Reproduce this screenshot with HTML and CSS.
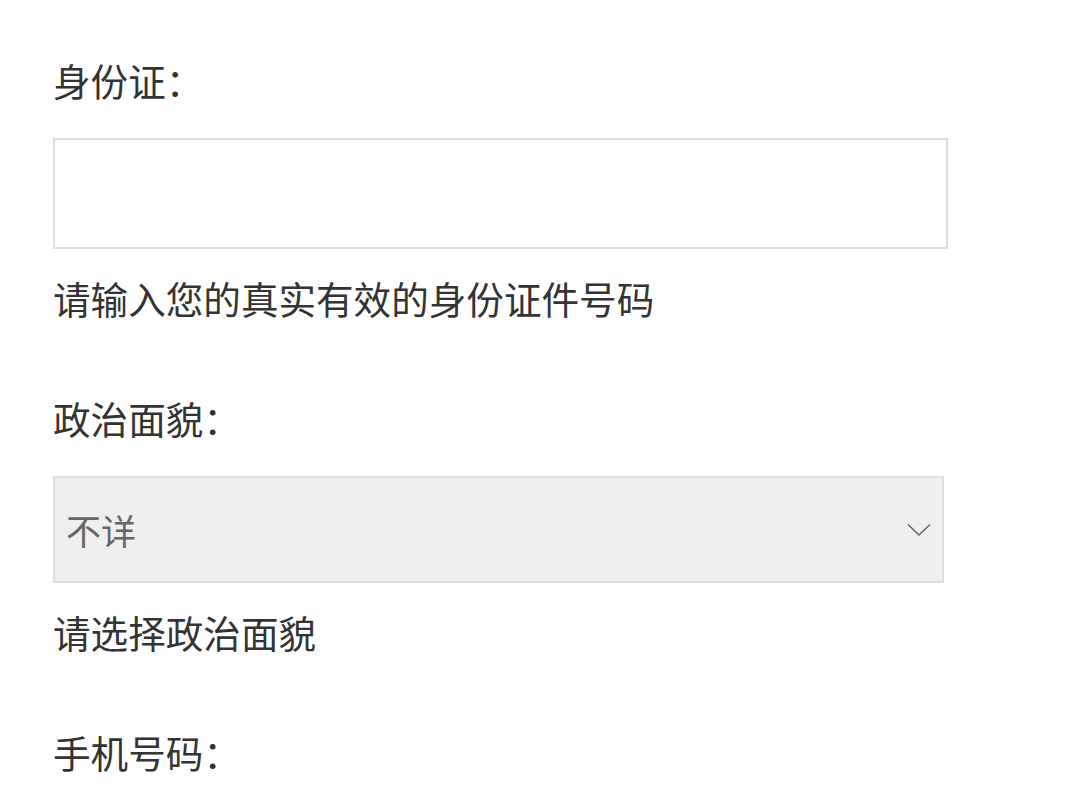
FILE: index.html
```html
<!DOCTYPE html>
<html lang="zh-CN">
<head>
<meta charset="utf-8">
<link rel="stylesheet" href="styles.css">
<title>表单</title>
</head>
<body>
<form class="form">
  <div class="field">
    <label class="label">身份证：</label>
    <div class="input"></div>
    <p class="help">请输入您的真实有效的身份证件号码</p>
  </div>
  <div class="field">
    <label class="label">政治面貌：</label>
    <div class="select">
      <span class="select-value">不详</span>
      <svg class="chevron" width="24" height="14" viewBox="0 0 24 14"><path d="M1 1.5 L12 12 L23 1.5" fill="none" stroke="#666" stroke-width="1.6"/></svg>
    </div>
    <p class="help">请选择政治面貌</p>
  </div>
  <div class="field">
    <label class="label">手机号码：</label>
  </div>
</form>
</body>
</html>
```
FILE: styles.css
```css
html, body {
  margin: 0;
  padding: 0;
  background: #fff;
}
body {
  font-family: "Noto Sans CJK SC", "Noto Sans", sans-serif;
  color: #333;
  font-size: 37.6px;
  line-height: 54px;
}
.form {
  padding: 53px 0 0 53px;
  display: flex;
  flex-direction: column;
  gap: 66px;
}
.field {
  display: flex;
  flex-direction: column;
  align-items: flex-start;
}
.label {
  display: block;
  margin-bottom: 31px;
}
.input {
  box-sizing: border-box;
  width: 895px;
  height: 111px;
  border: 2px solid #dedede;
  background: #fff;
}
.select {
  box-sizing: border-box;
  width: 891px;
  height: 107px;
  border: 2px solid #dedede;
  background: #efefef;
  display: flex;
  align-items: center;
  justify-content: space-between;
  padding: 0 11px 0 11px;
  color: #666;
  font-size: 35px;
}
.chevron {
  display: block;
}
.help {
  margin: 22px 0 0;
}
```
